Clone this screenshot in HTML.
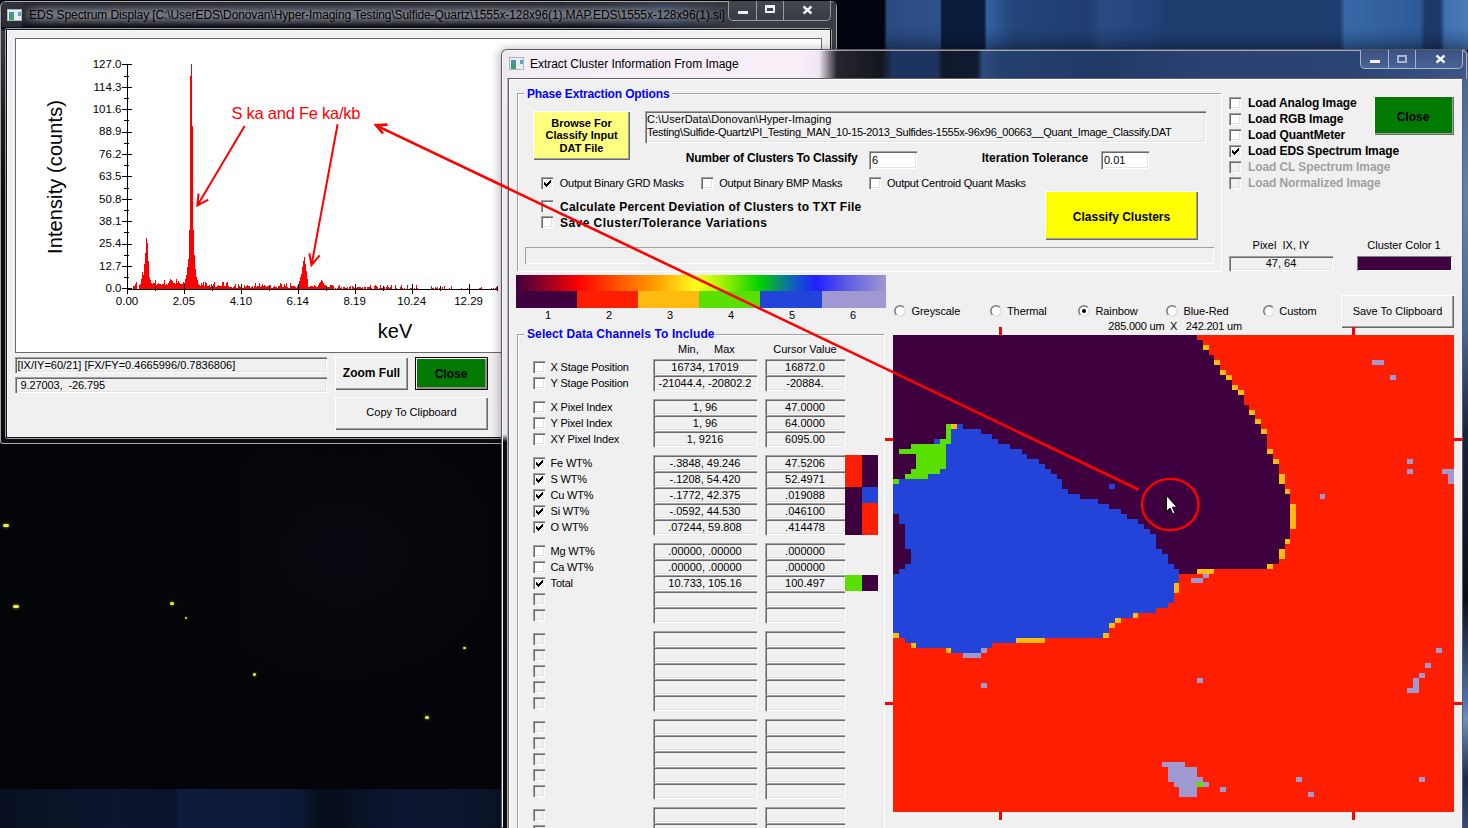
<!DOCTYPE html>
<html><head><meta charset="utf-8"><style>
html,body{margin:0;padding:0;width:1468px;height:828px;overflow:hidden;background:#000}
.abs{position:absolute}
.t{position:absolute;white-space:nowrap;font-family:"Liberation Sans", sans-serif;line-height:1.2;}
.sunk{background:#f0f0f0;box-shadow:inset 1px 1px 0 #a0a0a0, inset 2px 2px 0 #696969, inset -1px -1px 0 #fff, inset -2px -2px 0 #e3e3e3}
.sunkw{background:#fff;box-shadow:inset 1px 1px 0 #a0a0a0, inset 2px 2px 0 #696969, inset -1px -1px 0 #fff, inset -2px -2px 0 #e3e3e3}
.btn{background:#f0f0f0;box-shadow:inset 1px 1px 0 #fff, inset -1px -1px 0 #696969, inset -2px -2px 0 #a0a0a0}
.grp{box-shadow:inset 1px 1px 0 #a0a0a0, inset 2px 2px 0 #fff, 1px 1px 0 #fff}
.prog{background:#f0f0f0;box-shadow:inset 1px 1px 0 #a0a0a0, inset -1px -1px 0 #fff}
.cb{position:absolute;width:12px;height:12px;box-sizing:border-box;background:#fff;box-shadow:inset 1px 1px 0 #a0a0a0, inset 2px 2px 0 #696969, inset -1px -1px 0 #fff, inset -2px -2px 0 #e3e3e3}
.cb.dis{background:#f0f0f0}
</style></head><body>
<div class="abs" style="left:0;top:0;width:1468px;height:828px;background:#040509"></div><div class="abs" style="left:240px;top:450px;width:260px;height:230px;background:radial-gradient(ellipse at 40% 45%,rgba(16,18,30,0.35),rgba(10,12,20,0) 70%)"></div><div class="abs" style="left:837px;top:0;width:631px;height:50px;background:linear-gradient(90deg,#02050f 0px,#02050f 47px,#2a4a82 50px,#2e5088 103px,#0a1a3a 105px,#0a1a3a 147px,#3262a0 150px,#24467c 175px,#1f3d70 250px,#2a4a82 265px,#22427a 313px,#1e3e70 330px,#1e3e70 503px,#3868a8 508px,#2e5a98 583px,#1e3868 588px,#1e3868 603px,#4070b0 608px,#4a7ab8 631px)"></div><div class="abs" style="left:0;top:789px;width:501px;height:39px;background:linear-gradient(90deg,#081022,#0b162e 120px,#08122a 175px,#0e1c3c 180px,#0c1834 300px,#060c1a 320px,#0c1630 400px,#0a1428 501px)"></div><div class="abs" style="left:884px;top:28px;width:584px;height:22px;background:linear-gradient(180deg,rgba(8,16,36,0),rgba(8,16,36,0.35))"></div><div class="abs" style="left:3px;top:524px;width:6px;height:3px;background:#e8f040;border-radius:2px;box-shadow:0 0 3px #a0b020"></div><div class="abs" style="left:13px;top:605px;width:6px;height:3px;background:#e8f040;border-radius:2px;box-shadow:0 0 3px #a0b020"></div><div class="abs" style="left:170px;top:602px;width:4px;height:3px;background:#e8f040;border-radius:2px;box-shadow:0 0 3px #a0b020"></div><div class="abs" style="left:185px;top:617px;width:2px;height:2px;background:#e8f040;border-radius:2px;box-shadow:0 0 3px #a0b020"></div><div class="abs" style="left:253px;top:673px;width:3px;height:3px;background:#e8f040;border-radius:2px;box-shadow:0 0 3px #a0b020"></div><div class="abs" style="left:425px;top:716px;width:4px;height:3px;background:#e8f040;border-radius:2px;box-shadow:0 0 3px #a0b020"></div><div class="abs" style="left:463px;top:647px;width:3px;height:2px;background:#e8f040;border-radius:2px;box-shadow:0 0 3px #a0b020"></div><div class="abs" style="left:0;top:1px;width:837px;height:443px;border-radius:6px 6px 3px 3px;background:linear-gradient(180deg,#2e3038 0px,#24262e 4px,#1c1e26 22px,#0a0c14 27px,#3a3c44 30px,#34363e 50px,#1a1b20 120px,#0c0c10 200px);box-shadow:inset 0 0 0 1px #a8a8ac"></div><div class="abs" style="left:0;top:0;width:837px;height:1px;background:#000"></div><div class="abs" style="left:18px;top:3px;width:725px;height:23px;background:linear-gradient(180deg,rgba(118,120,128,0) 0%,rgba(118,120,128,0.85) 40%,rgba(118,120,128,0.85) 60%,rgba(118,120,128,0) 100%);-webkit-mask-image:linear-gradient(90deg,transparent,#000 25px,#000 690px,transparent)"></div><div class="abs" style="left:2px;top:2px;width:20px;height:25px;background:#3a3c44;opacity:0.6"></div><div class="abs" style="left:580px;top:2px;width:150px;height:25px;background:linear-gradient(90deg,rgba(60,80,120,0),rgba(80,100,140,0.35) 60%,rgba(60,80,120,0))"></div><div class="abs" style="left:660px;top:2px;width:172px;height:26px;background:linear-gradient(90deg,rgba(58,60,68,0),rgba(58,60,68,1) 80px)"></div><div class="abs" style="left:832px;top:2px;width:4px;height:60px;background:#3a3c44"></div><div class="abs" style="left:7px;top:9px;width:15px;height:12px;background:#e8ecec;border:1px solid #b0b4b8;box-sizing:border-box"><div class="abs" style="left:1px;top:2px;width:5px;height:8px;background:linear-gradient(#4a90b0,#40a060)"></div><div class="abs" style="left:10px;top:2px;width:3px;height:4px;background:#60a0c0"></div></div><div class="t " style="left:29px;top:8.3px;font-size:12px;font-weight:normal;color:#000;letter-spacing:-0.1px;text-shadow:0 0 5px rgba(200,200,206,0.6)">EDS Spectrum Display [C:\UserEDS\Donovan\Hyper-Imaging Testing\Sulfide-Quartz\1555x-128x96(1).MAP.EDS\1555x-128x96(1).si]</div><div class="abs" style="left:728px;top:1px;width:103px;height:20px;border:1px solid #9a9ca2;border-top:none;border-radius:0 0 5px 5px;box-sizing:border-box;background:linear-gradient(180deg,#44464e,#3a3c44)"></div><div class="abs" style="left:756px;top:1px;width:1px;height:19px;background:#9a9ca2"></div><div class="abs" style="left:783px;top:1px;width:1px;height:19px;background:#9a9ca2"></div><div class="abs" style="left:738px;top:11px;width:10px;height:3px;background:#f0f0f0"></div><div class="abs" style="left:765px;top:5px;width:10px;height:8px;border:2px solid #f0f0f0;border-top-width:3px;box-sizing:border-box"></div><svg class="abs" style="left:800px;top:5px" width="14" height="10"><path d="M3.5 1.5 L11.5 8.5 M11.5 1.5 L3.5 8.5" stroke="#f4f4f4" stroke-width="2.4"/></svg><div class="abs" style="left:5px;top:28px;width:827px;height:411px;border-radius:3px;box-shadow:inset 0 0 0 1px #a0a2a8"></div><div class="abs" style="left:7px;top:30px;width:823px;height:407px;background:#f0f0f0;box-shadow:0 0 0 1px #101218, inset 1px 1px 0 #fff"></div><div class="abs" style="left:15px;top:38px;width:807px;height:315px;background:#fff;box-shadow:inset 1px 1px 0 #6a6a6a, inset -1px -1px 0 #6a6a6a"></div><svg class="abs" style="left:0;top:0" width="837" height="443" shape-rendering="crispEdges"><path d="M133 289v-3M134 289v-3M135 289v-5M136 289v-7M139 289v-4M140 289v-5M141 289v-10M142 289v-17M143 289v-14M144 289v-25M145 289v-36M146 289v-51M147 289v-46M148 289v-28M149 289v-12M150 289v-9M151 289v-6M152 289v-5M153 289v-6M154 289v-6M155 289v-9M156 289v-4M157 289v-5M158 289v-6M159 289v-5M160 289v-5M161 289v-4M162 289v-5M163 289v-5M164 289v-9M165 289v-4M166 289v-5M167 289v-4M168 289v-6M169 289v-8M170 289v-10M171 289v-9M172 289v-8M173 289v-6M174 289v-6M175 289v-5M176 289v-10M177 289v-6M178 289v-8M179 289v-6M180 289v-5M181 289v-5M182 289v-5M183 289v-7M184 289v-6M185 289v-10M186 289v-14M187 289v-22M188 289v-30M189 289v-59M190 289v-213M191 289v-225M192 289v-163M193 289v-59M194 289v-34M195 289v-20M196 289v-12M197 289v-9M198 289v-5M199 289v-4M200 289v-3M201 289v-6M202 289v-4M203 289v-7M204 289v-3M205 289v-7M206 289v-6M207 289v-3M208 289v-3M209 289v-4M210 289v-2M211 289v-5M212 289v-3M213 289v-5M214 289v-7M215 289v-2M216 289v-2M217 289v-3M218 289v-4M219 289v-3M220 289v-3M221 289v-3M222 289v-7M223 289v-7M224 289v-3M225 289v-3M226 289v-6M227 289v-7M228 289v-3M229 289v-2M230 289v-2M231 289v-2M232 289v-1M233 289v-2M234 289v-3M235 289v-5M236 289v-1M237 289v-1M238 289v-5M239 289v-3M240 289v-2M241 289v-2M242 289v-1M243 289v-1M244 289v-4M245 289v-2M246 289v-3M247 289v-4M248 289v-3M249 289v-3M250 289v-1M251 289v-2M252 289v-3M253 289v-1M254 289v-3M255 289v-6M256 289v-2M257 289v-3M258 289v-3M259 289v-6M260 289v-2M261 289v-3M262 289v-5M263 289v-3M264 289v-4M265 289v-3M266 289v-2M267 289v-3M268 289v-3M269 289v-4M270 289v-4M271 289v-1M272 289v-1M273 289v-2M274 289v-3M275 289v-2M276 289v-2M277 289v-1M278 289v-3M279 289v-3M280 289v-6M281 289v-5M282 289v-2M283 289v-2M284 289v-5M285 289v-3M286 289v-6M287 289v-2M288 289v-1M289 289v-1M290 289v-6M291 289v-3M292 289v-3M293 289v-3M294 289v-3M295 289v-2M296 289v-1M297 289v-3M298 289v-1M299 289v-8M300 289v-12M301 289v-15M302 289v-22M303 289v-28M304 289v-32M305 289v-25M306 289v-18M307 289v-10M308 289v-2M309 289v-2M310 289v-3M311 289v-3M312 289v-3M313 289v-2M314 289v-4M315 289v-3M316 289v-2M317 289v-2M318 289v-4M319 289v-6M320 289v-7M321 289v-9M322 289v-8M323 289v-6M324 289v-4M325 289v-4M326 289v-2M327 289v-2M328 289v-2M329 289v-2M330 289v-4M331 289v-4M332 289v-4M333 289v-3M335 289v-1M337 289v-1M338 289v-3M339 289v-4M340 289v-1M341 289v-2M343 289v-2M344 289v-2M345 289v-1M346 289v-1M347 289v-2M349 289v-2M350 289v-3M352 289v-3M353 289v-2M354 289v-1M355 289v-1M356 289v-1M357 289v-2M358 289v-2M359 289v-2M360 289v-2M361 289v-1M362 289v-2M364 289v-2M365 289v-2M367 289v-2M368 289v-2M369 289v-2M370 289v-4M371 289v-1M374 289v-3M375 289v-4M376 289v-3M377 289v-2M379 289v-1M380 289v-4M381 289v-1M382 289v-1M384 289v-2M386 289v-2M387 289v-4M388 289v-2M389 289v-1M390 289v-2M391 289v-4M395 289v-4M396 289v-1M400 289v-2M401 289v-4M402 289v-1M404 289v-1M407 289v-4M410 289v-1M411 289v-1M412 289v-1M414 289v-1M416 289v-4M417 289v-1M431 289v-3M432 289v-1M433 289v-1M435 289v-2M436 289v-1M437 289v-2M439 289v-1M440 289v-1M442 289v-2M444 289v-3M449 289v-1M451 289v-3M461 289v-1M467 289v-1M479 289v-1M480 289v-1M481 289v-2M491 289v-1M493 289v-1M495 289v-1M496 289v-2" stroke="#ff0000" stroke-width="1" transform="translate(0.5,0)"/><rect x="127" y="64" width="1" height="225" fill="#000"/><rect x="122" y="64" width="10" height="1" fill="#000"/><rect x="124" y="76" width="5" height="1" fill="#000"/><rect x="122" y="87" width="10" height="1" fill="#000"/><rect x="124" y="98" width="5" height="1" fill="#000"/><rect x="122" y="109" width="10" height="1" fill="#000"/><rect x="124" y="120" width="5" height="1" fill="#000"/><rect x="122" y="132" width="10" height="1" fill="#000"/><rect x="124" y="143" width="5" height="1" fill="#000"/><rect x="122" y="154" width="10" height="1" fill="#000"/><rect x="124" y="165" width="5" height="1" fill="#000"/><rect x="122" y="176" width="10" height="1" fill="#000"/><rect x="124" y="188" width="5" height="1" fill="#000"/><rect x="122" y="199" width="10" height="1" fill="#000"/><rect x="124" y="210" width="5" height="1" fill="#000"/><rect x="122" y="221" width="10" height="1" fill="#000"/><rect x="124" y="232" width="5" height="1" fill="#000"/><rect x="122" y="244" width="10" height="1" fill="#000"/><rect x="124" y="255" width="5" height="1" fill="#000"/><rect x="122" y="266" width="10" height="1" fill="#000"/><rect x="124" y="277" width="5" height="1" fill="#000"/><rect x="122" y="288" width="10" height="1" fill="#000"/><rect x="127" y="289" width="371" height="1" fill="#000"/><rect x="127" y="284" width="1" height="10" fill="#000"/><rect x="155" y="286" width="1" height="5" fill="#000"/><rect x="184" y="284" width="1" height="10" fill="#000"/><rect x="212" y="286" width="1" height="5" fill="#000"/><rect x="241" y="284" width="1" height="10" fill="#000"/><rect x="269" y="286" width="1" height="5" fill="#000"/><rect x="298" y="284" width="1" height="10" fill="#000"/><rect x="326" y="286" width="1" height="5" fill="#000"/><rect x="355" y="284" width="1" height="10" fill="#000"/><rect x="383" y="286" width="1" height="5" fill="#000"/><rect x="412" y="284" width="1" height="10" fill="#000"/><rect x="440" y="286" width="1" height="5" fill="#000"/><rect x="469" y="284" width="1" height="10" fill="#000"/><rect x="497" y="286" width="1" height="5" fill="#000"/></svg><div class="t" style="left:71.5px;width:50px;text-align:right;top:58.1px;font-size:11.5px;font-weight:normal;color:#000;">127.0</div><div class="t" style="left:71.5px;width:50px;text-align:right;top:80.5px;font-size:11.5px;font-weight:normal;color:#000;">114.3</div><div class="t" style="left:71.5px;width:50px;text-align:right;top:102.9px;font-size:11.5px;font-weight:normal;color:#000;">101.6</div><div class="t" style="left:71.5px;width:50px;text-align:right;top:125.3px;font-size:11.5px;font-weight:normal;color:#000;">88.9</div><div class="t" style="left:71.5px;width:50px;text-align:right;top:147.7px;font-size:11.5px;font-weight:normal;color:#000;">76.2</div><div class="t" style="left:71.5px;width:50px;text-align:right;top:170.1px;font-size:11.5px;font-weight:normal;color:#000;">63.5</div><div class="t" style="left:71.5px;width:50px;text-align:right;top:192.5px;font-size:11.5px;font-weight:normal;color:#000;">50.8</div><div class="t" style="left:71.5px;width:50px;text-align:right;top:214.9px;font-size:11.5px;font-weight:normal;color:#000;">38.1</div><div class="t" style="left:71.5px;width:50px;text-align:right;top:237.3px;font-size:11.5px;font-weight:normal;color:#000;">25.4</div><div class="t" style="left:71.5px;width:50px;text-align:right;top:259.7px;font-size:11.5px;font-weight:normal;color:#000;">12.7</div><div class="t" style="left:71.5px;width:50px;text-align:right;top:282.1px;font-size:11.5px;font-weight:normal;color:#000;">0.0</div><div class="t" style="left:97.0px;width:60px;text-align:center;top:295.1px;font-size:11.5px;font-weight:normal;color:#000;">0.00</div><div class="t" style="left:153.93px;width:60px;text-align:center;top:295.1px;font-size:11.5px;font-weight:normal;color:#000;">2.05</div><div class="t" style="left:210.86px;width:60px;text-align:center;top:295.1px;font-size:11.5px;font-weight:normal;color:#000;">4.10</div><div class="t" style="left:267.78999999999996px;width:60px;text-align:center;top:295.1px;font-size:11.5px;font-weight:normal;color:#000;">6.14</div><div class="t" style="left:324.72px;width:60px;text-align:center;top:295.1px;font-size:11.5px;font-weight:normal;color:#000;">8.19</div><div class="t" style="left:381.65px;width:60px;text-align:center;top:295.1px;font-size:11.5px;font-weight:normal;color:#000;">10.24</div><div class="t" style="left:438.58px;width:60px;text-align:center;top:295.1px;font-size:11.5px;font-weight:normal;color:#000;">12.29</div><div class="t" style="left:355.0px;width:80px;text-align:center;top:319.0px;font-size:20px;font-weight:normal;color:#000;">keV</div><div class="t" style="left:-20px;top:166.5px;width:150px;text-align:center;font-size:20px;transform:rotate(-90deg);transform-origin:75px 12px;letter-spacing:0.1px">Intensity (counts)</div><div class="t " style="left:231.5px;top:104.1px;font-size:16.5px;font-weight:normal;color:#ff0000;letter-spacing:-0.25px">S ka and Fe ka/kb</div><div class="sunk abs" style="left:15px;top:357px;width:312px;height:16px;"></div><div class="sunk abs" style="left:15px;top:377px;width:312px;height:16px;"></div><div class="t " style="left:17.5px;top:358.9px;font-size:11px;font-weight:normal;color:#000;letter-spacing:0px">[IX/IY=60/21] [FX/FY=0.4665996/0.7836806]</div><div class="t " style="left:20.5px;top:378.9px;font-size:11px;font-weight:normal;color:#000;letter-spacing:-0.1px">9.27003,&nbsp; -26.795</div><div class="btn abs" style="left:335px;top:357px;width:73px;height:33px;"></div><div class="t" style="left:336.5px;width:70px;text-align:center;top:366.3px;font-size:12px;font-weight:bold;color:#000;">Zoom Full</div><div class="abs" style="left:415px;top:357px;width:73px;height:33px;border:1px solid #1a0000;box-sizing:border-box;background:#007a00;box-shadow:inset 1px 1px 0 #fff, inset -2px -2px 0 #909090"></div><div class="t" style="left:416.0px;width:70px;text-align:center;top:366.8px;font-size:12px;font-weight:bold;color:#000;">Close</div><div class="btn abs" style="left:335px;top:397px;width:153px;height:33px;"></div><div class="t" style="left:336.5px;width:150px;text-align:center;top:406.4px;font-size:11px;font-weight:normal;color:#000;">Copy To Clipboard</div><div class="abs" style="left:501px;top:49px;width:967px;height:779px;border-radius:6px 6px 0 0;background:linear-gradient(90deg,#ece6ee 0px,#f4eef6 20px,#f6eff7 300px,#f0e6f2 318px,#262630 336px,#14161e 380px,#1e3460 392px,#1e3460 436px,#10182c 442px,#121a30 476px,#2e4c80 482px,#24406e 500px,#203a66 600px,#2a4272 700px,#2a4474 850px,#3c5688 967px);box-shadow:inset 0 0 0 1px #5a5a62, inset 0 0 0 2px rgba(255,255,255,0.55), -2px 0 10px rgba(0,0,0,0.28)"></div><div class="abs" style="left:503px;top:79px;width:5px;height:749px;background:linear-gradient(180deg,#f2ecf4 0px,#eee4f0 355px,#0c0c12 363px,#0c0c10 749px)"></div><div class="abs" style="left:507px;top:78px;width:1px;height:750px;background:#b8b8bc"></div><div class="abs" style="left:1462px;top:79px;width:6px;height:749px;background:linear-gradient(180deg,#4a64a0 0px,#6080b8 120px,#4a66a0 250px,#1a2440 350px,#0a0e1a 520px,#4a70b0 620px,#6a90c8 640px,#1a2a50 700px,#304a80 749px);box-shadow:inset 1px 0 0 #8890a0"></div><div class="abs" style="left:509px;top:57px;width:15px;height:13px;background:#e8ecec;border:1px solid #b0b4b8;box-sizing:border-box"><div class="abs" style="left:1px;top:2px;width:5px;height:9px;background:linear-gradient(#4a90b0,#40a060)"></div><div class="abs" style="left:10px;top:2px;width:3px;height:4px;background:#60a0c0"></div></div><div class="t " style="left:530px;top:57.3px;font-size:12px;font-weight:normal;color:#000;letter-spacing:-0.04px">Extract Cluster Information From Image</div><div class="abs" style="left:1360px;top:50px;width:103px;height:19px;border:1px solid #a8b4c8;border-top:none;border-radius:0 0 5px 5px;box-sizing:border-box;background:linear-gradient(180deg,#3a5282,#4a6496)"></div><div class="abs" style="left:1388px;top:50px;width:1px;height:18px;background:#a8b4c8"></div><div class="abs" style="left:1415px;top:50px;width:1px;height:18px;background:#a8b4c8"></div><div class="abs" style="left:1370px;top:60px;width:10px;height:3px;background:#f4f4f4"></div><div class="abs" style="left:1397px;top:55px;width:10px;height:8px;border:2px solid #a8b4d0;box-sizing:border-box"></div><svg class="abs" style="left:1433px;top:54px" width="14" height="10"><path d="M3.5 1.5 L11.5 8.5 M11.5 1.5 L3.5 8.5" stroke="#f4f4f4" stroke-width="2.4"/></svg><div class="abs" style="left:509px;top:79px;width:953px;height:749px;background:#f0f0f0;box-shadow:0 0 0 1px #5e5e64, inset 1px 1px 0 #fff"></div><div class="grp abs" style="left:517px;top:93px;width:704px;height:178px;"></div><div class="abs" style="left:524px;top:86px;width:148px;height:14px;background:#f0f0f0"></div><div class="t " style="left:527px;top:87.3px;font-size:12px;font-weight:bold;color:#0000ff;letter-spacing:-0.15px">Phase Extraction Options</div><div class="abs" style="left:533px;top:111px;width:97px;height:49px;background:#ffff80;box-sizing:border-box;box-shadow:inset 1px 1px 0 #fff, inset -1px -1px 0 #696969, inset -2px -2px 0 #a0a0a0"></div><div class="t" style="left:531.5px;width:100px;text-align:center;top:116.7px;font-size:11px;font-weight:bold;color:#000;">Browse For</div><div class="t" style="left:531.5px;width:100px;text-align:center;top:129.2px;font-size:11px;font-weight:bold;color:#000;">Classify Input</div><div class="t" style="left:531.5px;width:100px;text-align:center;top:141.9px;font-size:11px;font-weight:bold;color:#000;">DAT File</div><div class="sunk abs" style="left:645px;top:111px;width:561px;height:32px;"></div><div class="t " style="left:647px;top:113.4px;font-size:11px;font-weight:normal;color:#000;letter-spacing:0.05px">C:\UserData\Donovan\Hyper-Imaging</div><div class="t " style="left:647px;top:126.4px;font-size:11px;font-weight:normal;color:#000;letter-spacing:-0.27px">Testing\Sulfide-Quartz\PI_Testing_MAN_10-15-2013_Sulfides-1555x-96x96_00663__Quant_Image_Classify.DAT</div><div class="t " style="left:685.7px;top:150.8px;font-size:12px;font-weight:bold;color:#000;letter-spacing:-0.2px">Number of Clusters To Classify</div><div class="sunkw abs" style="left:869px;top:151px;width:48px;height:18px;"></div><div class="t " style="left:872px;top:153.9px;font-size:11px;font-weight:normal;color:#000;">6</div><div class="t " style="left:981.7px;top:150.8px;font-size:12px;font-weight:bold;color:#000;letter-spacing:0px">Iteration Tolerance</div><div class="sunkw abs" style="left:1101px;top:151px;width:48px;height:18px;"></div><div class="t " style="left:1104px;top:153.9px;font-size:11px;font-weight:normal;color:#000;">0.01</div><div class="cb" style="left:541px;top:177px"><svg width="12" height="12" style="position:absolute;left:0;top:0" shape-rendering="crispEdges"><path d="M3 5h1v3h-1zM4 6h1v3h-1zM5 7h1v3h-1zM6 6h1v3h-1zM7 5h1v3h-1zM8 4h1v3h-1zM9 3h1v3h-1z" fill="#000"/></svg></div><div class="t " style="left:559.8px;top:176.9px;font-size:11px;font-weight:normal;color:#000;letter-spacing:-0.25px">Output Binary GRD Masks</div><div class="cb" style="left:701px;top:177px"></div><div class="t " style="left:719.2px;top:176.9px;font-size:11px;font-weight:normal;color:#000;letter-spacing:-0.25px">Output Binary BMP Masks</div><div class="cb" style="left:869px;top:177px"></div><div class="t " style="left:887px;top:176.9px;font-size:11px;font-weight:normal;color:#000;letter-spacing:-0.25px">Output Centroid Quant Masks</div><div class="cb" style="left:541px;top:200px"></div><div class="t " style="left:560px;top:199.8px;font-size:12px;font-weight:bold;color:#000;letter-spacing:0.25px">Calculate Percent Deviation of Clusters to TXT File</div><div class="cb" style="left:541px;top:216px"></div><div class="t " style="left:560px;top:215.8px;font-size:12px;font-weight:bold;color:#000;letter-spacing:0.45px">Save Cluster/Tolerance Variations</div><div class="abs" style="left:1045px;top:191px;width:153px;height:49px;background:#ffff00;box-sizing:border-box;box-shadow:inset 1px 1px 0 #fff, inset -1px -1px 0 #696969, inset -2px -2px 0 #a0a0a0"></div><div class="t" style="left:1046.5px;width:150px;text-align:center;top:209.8px;font-size:12px;font-weight:bold;color:#000;">Classify Clusters</div><div class="prog abs" style="left:525px;top:247px;width:689px;height:17px;"></div><div class="cb" style="left:1229px;top:97px"></div><div class="t " style="left:1248px;top:96.3px;font-size:12px;font-weight:bold;color:#000;letter-spacing:-0.1px">Load Analog Image</div><div class="cb" style="left:1229px;top:113px"></div><div class="t " style="left:1248px;top:112.3px;font-size:12px;font-weight:bold;color:#000;letter-spacing:-0.1px">Load RGB Image</div><div class="cb" style="left:1229px;top:129px"></div><div class="t " style="left:1248px;top:128.3px;font-size:12px;font-weight:bold;color:#000;letter-spacing:-0.1px">Load QuantMeter</div><div class="cb" style="left:1229px;top:145px"><svg width="12" height="12" style="position:absolute;left:0;top:0" shape-rendering="crispEdges"><path d="M3 5h1v3h-1zM4 6h1v3h-1zM5 7h1v3h-1zM6 6h1v3h-1zM7 5h1v3h-1zM8 4h1v3h-1zM9 3h1v3h-1z" fill="#000"/></svg></div><div class="t " style="left:1248px;top:144.3px;font-size:12px;font-weight:bold;color:#000;letter-spacing:-0.1px">Load EDS Spectrum Image</div><div class="cb dis" style="left:1229px;top:161px"></div><div class="t " style="left:1248px;top:160.3px;font-size:12px;font-weight:bold;color:#a0a0a0;letter-spacing:-0.1px">Load CL Spectrum Image</div><div class="cb dis" style="left:1229px;top:177px"></div><div class="t " style="left:1248px;top:176.3px;font-size:12px;font-weight:bold;color:#a0a0a0;letter-spacing:-0.1px">Load Normalized Image</div><div class="abs" style="left:1374px;top:96px;width:80px;height:39px;background:#007a00;box-sizing:border-box;box-shadow:inset 1px 1px 0 #fff, inset -1px -1px 0 #696969, inset -2px -2px 0 #a0a0a0"></div><div class="t" style="left:1378.0px;width:70px;text-align:center;top:109.8px;font-size:12px;font-weight:bold;color:#000;">Close</div><div class="t" style="left:1231.0px;width:100px;text-align:center;top:239.0px;font-size:11px;font-weight:normal;color:#000;">Pixel&nbsp; IX, IY</div><div class="sunk abs" style="left:1229px;top:256px;width:104px;height:15px;"></div><div class="t" style="left:1231.0px;width:100px;text-align:center;top:257.4px;font-size:11px;font-weight:normal;color:#000;">47, 64</div><div class="t" style="left:1354.0px;width:100px;text-align:center;top:239.0px;font-size:11px;font-weight:normal;color:#000;">Cluster Color 1</div><div class="abs" style="left:1357px;top:256px;width:95px;height:15px;background:#3f003f;box-shadow:inset 1px 1px 0 #808080, inset -1px -1px 0 #fff"></div><div class="abs" style="left:516px;top:275px;width:370px;height:16px;background:linear-gradient(90deg,#400040 0%,#a00020 9%,#ff0000 17%,#ff5000 27%,#ffa000 38%,#ffff20 49%,#90f000 57%,#00d000 66%,#1060c0 75%,#2020ff 81%,#6060e0 90%,#a098d0 100%)"></div><div class="abs" style="left:516px;top:291px;width:61px;height:17px;background:#3f003f"></div><div class="abs" style="left:577px;top:291px;width:61px;height:17px;background:#ff1e00"></div><div class="abs" style="left:638px;top:291px;width:61px;height:17px;background:#ffbb10"></div><div class="abs" style="left:699px;top:291px;width:61px;height:17px;background:#5ae000"></div><div class="abs" style="left:760px;top:291px;width:62px;height:17px;background:#2244d8"></div><div class="abs" style="left:822px;top:291px;width:64px;height:17px;background:#a098d0"></div><div class="t" style="left:538.0px;width:20px;text-align:center;top:309.4px;font-size:11px;font-weight:normal;color:#000;">1</div><div class="t" style="left:599.0px;width:20px;text-align:center;top:309.4px;font-size:11px;font-weight:normal;color:#000;">2</div><div class="t" style="left:660.0px;width:20px;text-align:center;top:309.4px;font-size:11px;font-weight:normal;color:#000;">3</div><div class="t" style="left:721.0px;width:20px;text-align:center;top:309.4px;font-size:11px;font-weight:normal;color:#000;">4</div><div class="t" style="left:782.0px;width:20px;text-align:center;top:309.4px;font-size:11px;font-weight:normal;color:#000;">5</div><div class="t" style="left:843.0px;width:20px;text-align:center;top:309.4px;font-size:11px;font-weight:normal;color:#000;">6</div><svg style="position:absolute;left:894px;top:305px" width="12" height="12"><circle cx="6" cy="6" r="5" fill="#fff" stroke="#dcdcdc" stroke-width="1.2"/><path d="M2.3 9.7 A5 5 0 0 1 9.7 2.3" stroke="#7a7a7a" stroke-width="1.5" fill="none"/></svg><div class="t " style="left:911.6px;top:304.9px;font-size:11px;font-weight:normal;color:#000;letter-spacing:-0.1px">Greyscale</div><svg style="position:absolute;left:990px;top:305px" width="12" height="12"><circle cx="6" cy="6" r="5" fill="#fff" stroke="#dcdcdc" stroke-width="1.2"/><path d="M2.3 9.7 A5 5 0 0 1 9.7 2.3" stroke="#7a7a7a" stroke-width="1.5" fill="none"/></svg><div class="t " style="left:1007px;top:304.9px;font-size:11px;font-weight:normal;color:#000;letter-spacing:-0.1px">Thermal</div><svg style="position:absolute;left:1078px;top:305px" width="12" height="12"><circle cx="6" cy="6" r="5" fill="#fff" stroke="#dcdcdc" stroke-width="1.2"/><path d="M2.3 9.7 A5 5 0 0 1 9.7 2.3" stroke="#7a7a7a" stroke-width="1.5" fill="none"/><circle cx="6" cy="6" r="2" fill="#000"/></svg><div class="t " style="left:1095.5px;top:304.9px;font-size:11px;font-weight:normal;color:#000;letter-spacing:-0.1px">Rainbow</div><svg style="position:absolute;left:1166px;top:305px" width="12" height="12"><circle cx="6" cy="6" r="5" fill="#fff" stroke="#dcdcdc" stroke-width="1.2"/><path d="M2.3 9.7 A5 5 0 0 1 9.7 2.3" stroke="#7a7a7a" stroke-width="1.5" fill="none"/></svg><div class="t " style="left:1183.5px;top:304.9px;font-size:11px;font-weight:normal;color:#000;letter-spacing:-0.1px">Blue-Red</div><svg style="position:absolute;left:1262.5px;top:305px" width="12" height="12"><circle cx="6" cy="6" r="5" fill="#fff" stroke="#dcdcdc" stroke-width="1.2"/><path d="M2.3 9.7 A5 5 0 0 1 9.7 2.3" stroke="#7a7a7a" stroke-width="1.5" fill="none"/></svg><div class="t " style="left:1279.3px;top:304.9px;font-size:11px;font-weight:normal;color:#000;letter-spacing:-0.1px">Custom</div><div class="btn abs" style="left:1341px;top:295px;width:113px;height:33px;"></div><div class="t" style="left:1337.5px;width:120px;text-align:center;top:304.9px;font-size:11px;font-weight:normal;color:#000;">Save To Clipboard</div><div class="t " style="left:1108.3px;top:319.9px;font-size:11px;font-weight:normal;color:#000;letter-spacing:-0.2px">285.000 um&nbsp; X&nbsp;&nbsp; 242.201 um</div><div class="grp abs" style="left:517px;top:334px;width:367px;height:506px;"></div><div class="abs" style="left:524px;top:327px;width:192px;height:14px;background:#f0f0f0"></div><div class="t " style="left:527px;top:326.8px;font-size:12px;font-weight:bold;color:#0000ff;letter-spacing:0.1px">Select Data Channels To Include</div><div class="t " style="left:678px;top:343.4px;font-size:11px;font-weight:normal;color:#000;">Min,&nbsp;&nbsp;&nbsp;&nbsp; Max</div><div class="t" style="left:755.0px;width:100px;text-align:center;top:343.4px;font-size:11px;font-weight:normal;color:#000;">Cursor Value</div><div class="cb" style="left:533px;top:361px"></div><div class="t " style="left:550.6px;top:360.9px;font-size:11px;font-weight:normal;color:#000;letter-spacing:-0.2px">X Stage Position</div><div class="sunk abs" style="left:653px;top:359px;width:104px;height:16px;"></div><div class="sunk abs" style="left:765px;top:359px;width:80px;height:16px;"></div><div class="t" style="left:653.0px;width:104px;text-align:center;top:361.4px;font-size:11px;font-weight:normal;color:#000;">16734, 17019</div><div class="t" style="left:765.0px;width:80px;text-align:center;top:361.4px;font-size:11px;font-weight:normal;color:#000;">16872.0</div><div class="cb" style="left:533px;top:377px"></div><div class="t " style="left:550.6px;top:376.9px;font-size:11px;font-weight:normal;color:#000;letter-spacing:-0.2px">Y Stage Position</div><div class="sunk abs" style="left:653px;top:375px;width:104px;height:16px;"></div><div class="sunk abs" style="left:765px;top:375px;width:80px;height:16px;"></div><div class="t" style="left:653.0px;width:104px;text-align:center;top:377.4px;font-size:11px;font-weight:normal;color:#000;">-21044.4, -20802.2</div><div class="t" style="left:765.0px;width:80px;text-align:center;top:377.4px;font-size:11px;font-weight:normal;color:#000;">-20884.</div><div class="cb" style="left:533px;top:401px"></div><div class="t " style="left:550.6px;top:400.9px;font-size:11px;font-weight:normal;color:#000;letter-spacing:-0.2px">X Pixel Index</div><div class="sunk abs" style="left:653px;top:399px;width:104px;height:16px;"></div><div class="sunk abs" style="left:765px;top:399px;width:80px;height:16px;"></div><div class="t" style="left:653.0px;width:104px;text-align:center;top:401.4px;font-size:11px;font-weight:normal;color:#000;">1, 96</div><div class="t" style="left:765.0px;width:80px;text-align:center;top:401.4px;font-size:11px;font-weight:normal;color:#000;">47.0000</div><div class="cb" style="left:533px;top:417px"></div><div class="t " style="left:550.6px;top:416.9px;font-size:11px;font-weight:normal;color:#000;letter-spacing:-0.2px">Y Pixel Index</div><div class="sunk abs" style="left:653px;top:415px;width:104px;height:16px;"></div><div class="sunk abs" style="left:765px;top:415px;width:80px;height:16px;"></div><div class="t" style="left:653.0px;width:104px;text-align:center;top:417.4px;font-size:11px;font-weight:normal;color:#000;">1, 96</div><div class="t" style="left:765.0px;width:80px;text-align:center;top:417.4px;font-size:11px;font-weight:normal;color:#000;">64.0000</div><div class="cb" style="left:533px;top:433px"></div><div class="t " style="left:550.6px;top:432.9px;font-size:11px;font-weight:normal;color:#000;letter-spacing:-0.2px">XY Pixel Index</div><div class="sunk abs" style="left:653px;top:431px;width:104px;height:16px;"></div><div class="sunk abs" style="left:765px;top:431px;width:80px;height:16px;"></div><div class="t" style="left:653.0px;width:104px;text-align:center;top:433.4px;font-size:11px;font-weight:normal;color:#000;">1, 9216</div><div class="t" style="left:765.0px;width:80px;text-align:center;top:433.4px;font-size:11px;font-weight:normal;color:#000;">6095.00</div><div class="cb" style="left:533px;top:457px"><svg width="12" height="12" style="position:absolute;left:0;top:0" shape-rendering="crispEdges"><path d="M3 5h1v3h-1zM4 6h1v3h-1zM5 7h1v3h-1zM6 6h1v3h-1zM7 5h1v3h-1zM8 4h1v3h-1zM9 3h1v3h-1z" fill="#000"/></svg></div><div class="t " style="left:550.6px;top:456.9px;font-size:11px;font-weight:normal;color:#000;letter-spacing:-0.2px">Fe WT%</div><div class="sunk abs" style="left:653px;top:455px;width:104px;height:16px;"></div><div class="sunk abs" style="left:765px;top:455px;width:80px;height:16px;"></div><div class="t" style="left:653.0px;width:104px;text-align:center;top:457.4px;font-size:11px;font-weight:normal;color:#000;">-.3848, 49.246</div><div class="t" style="left:765.0px;width:80px;text-align:center;top:457.4px;font-size:11px;font-weight:normal;color:#000;">47.5206</div><div class="cb" style="left:533px;top:473px"><svg width="12" height="12" style="position:absolute;left:0;top:0" shape-rendering="crispEdges"><path d="M3 5h1v3h-1zM4 6h1v3h-1zM5 7h1v3h-1zM6 6h1v3h-1zM7 5h1v3h-1zM8 4h1v3h-1zM9 3h1v3h-1z" fill="#000"/></svg></div><div class="t " style="left:550.6px;top:472.9px;font-size:11px;font-weight:normal;color:#000;letter-spacing:-0.2px">S WT%</div><div class="sunk abs" style="left:653px;top:471px;width:104px;height:16px;"></div><div class="sunk abs" style="left:765px;top:471px;width:80px;height:16px;"></div><div class="t" style="left:653.0px;width:104px;text-align:center;top:473.4px;font-size:11px;font-weight:normal;color:#000;">-.1208, 54.420</div><div class="t" style="left:765.0px;width:80px;text-align:center;top:473.4px;font-size:11px;font-weight:normal;color:#000;">52.4971</div><div class="cb" style="left:533px;top:489px"><svg width="12" height="12" style="position:absolute;left:0;top:0" shape-rendering="crispEdges"><path d="M3 5h1v3h-1zM4 6h1v3h-1zM5 7h1v3h-1zM6 6h1v3h-1zM7 5h1v3h-1zM8 4h1v3h-1zM9 3h1v3h-1z" fill="#000"/></svg></div><div class="t " style="left:550.6px;top:488.9px;font-size:11px;font-weight:normal;color:#000;letter-spacing:-0.2px">Cu WT%</div><div class="sunk abs" style="left:653px;top:487px;width:104px;height:16px;"></div><div class="sunk abs" style="left:765px;top:487px;width:80px;height:16px;"></div><div class="t" style="left:653.0px;width:104px;text-align:center;top:489.4px;font-size:11px;font-weight:normal;color:#000;">-.1772, 42.375</div><div class="t" style="left:765.0px;width:80px;text-align:center;top:489.4px;font-size:11px;font-weight:normal;color:#000;">.019088</div><div class="cb" style="left:533px;top:505px"><svg width="12" height="12" style="position:absolute;left:0;top:0" shape-rendering="crispEdges"><path d="M3 5h1v3h-1zM4 6h1v3h-1zM5 7h1v3h-1zM6 6h1v3h-1zM7 5h1v3h-1zM8 4h1v3h-1zM9 3h1v3h-1z" fill="#000"/></svg></div><div class="t " style="left:550.6px;top:504.9px;font-size:11px;font-weight:normal;color:#000;letter-spacing:-0.2px">Si WT%</div><div class="sunk abs" style="left:653px;top:503px;width:104px;height:16px;"></div><div class="sunk abs" style="left:765px;top:503px;width:80px;height:16px;"></div><div class="t" style="left:653.0px;width:104px;text-align:center;top:505.4px;font-size:11px;font-weight:normal;color:#000;">-.0592, 44.530</div><div class="t" style="left:765.0px;width:80px;text-align:center;top:505.4px;font-size:11px;font-weight:normal;color:#000;">.046100</div><div class="cb" style="left:533px;top:521px"><svg width="12" height="12" style="position:absolute;left:0;top:0" shape-rendering="crispEdges"><path d="M3 5h1v3h-1zM4 6h1v3h-1zM5 7h1v3h-1zM6 6h1v3h-1zM7 5h1v3h-1zM8 4h1v3h-1zM9 3h1v3h-1z" fill="#000"/></svg></div><div class="t " style="left:550.6px;top:520.9px;font-size:11px;font-weight:normal;color:#000;letter-spacing:-0.2px">O WT%</div><div class="sunk abs" style="left:653px;top:519px;width:104px;height:16px;"></div><div class="sunk abs" style="left:765px;top:519px;width:80px;height:16px;"></div><div class="t" style="left:653.0px;width:104px;text-align:center;top:521.4px;font-size:11px;font-weight:normal;color:#000;">.07244, 59.808</div><div class="t" style="left:765.0px;width:80px;text-align:center;top:521.4px;font-size:11px;font-weight:normal;color:#000;">.414478</div><div class="cb" style="left:533px;top:545px"></div><div class="t " style="left:550.6px;top:544.9px;font-size:11px;font-weight:normal;color:#000;letter-spacing:-0.2px">Mg WT%</div><div class="sunk abs" style="left:653px;top:543px;width:104px;height:16px;"></div><div class="sunk abs" style="left:765px;top:543px;width:80px;height:16px;"></div><div class="t" style="left:653.0px;width:104px;text-align:center;top:545.4px;font-size:11px;font-weight:normal;color:#000;">.00000, .00000</div><div class="t" style="left:765.0px;width:80px;text-align:center;top:545.4px;font-size:11px;font-weight:normal;color:#000;">.000000</div><div class="cb" style="left:533px;top:561px"></div><div class="t " style="left:550.6px;top:560.9px;font-size:11px;font-weight:normal;color:#000;letter-spacing:-0.2px">Ca WT%</div><div class="sunk abs" style="left:653px;top:559px;width:104px;height:16px;"></div><div class="sunk abs" style="left:765px;top:559px;width:80px;height:16px;"></div><div class="t" style="left:653.0px;width:104px;text-align:center;top:561.4px;font-size:11px;font-weight:normal;color:#000;">.00000, .00000</div><div class="t" style="left:765.0px;width:80px;text-align:center;top:561.4px;font-size:11px;font-weight:normal;color:#000;">.000000</div><div class="cb" style="left:533px;top:577px"><svg width="12" height="12" style="position:absolute;left:0;top:0" shape-rendering="crispEdges"><path d="M3 5h1v3h-1zM4 6h1v3h-1zM5 7h1v3h-1zM6 6h1v3h-1zM7 5h1v3h-1zM8 4h1v3h-1zM9 3h1v3h-1z" fill="#000"/></svg></div><div class="t " style="left:550.6px;top:576.9px;font-size:11px;font-weight:normal;color:#000;letter-spacing:-0.2px">Total</div><div class="sunk abs" style="left:653px;top:575px;width:104px;height:16px;"></div><div class="sunk abs" style="left:765px;top:575px;width:80px;height:16px;"></div><div class="t" style="left:653.0px;width:104px;text-align:center;top:577.4px;font-size:11px;font-weight:normal;color:#000;">10.733, 105.16</div><div class="t" style="left:765.0px;width:80px;text-align:center;top:577.4px;font-size:11px;font-weight:normal;color:#000;">100.497</div><div class="cb dis" style="left:533px;top:593px"></div><div class="sunk abs" style="left:653px;top:591px;width:104px;height:16px;"></div><div class="sunk abs" style="left:765px;top:591px;width:80px;height:16px;"></div><div class="cb dis" style="left:533px;top:609px"></div><div class="sunk abs" style="left:653px;top:607px;width:104px;height:16px;"></div><div class="sunk abs" style="left:765px;top:607px;width:80px;height:16px;"></div><div class="cb dis" style="left:533px;top:633px"></div><div class="sunk abs" style="left:653px;top:631px;width:104px;height:16px;"></div><div class="sunk abs" style="left:765px;top:631px;width:80px;height:16px;"></div><div class="cb dis" style="left:533px;top:649px"></div><div class="sunk abs" style="left:653px;top:647px;width:104px;height:16px;"></div><div class="sunk abs" style="left:765px;top:647px;width:80px;height:16px;"></div><div class="cb dis" style="left:533px;top:665px"></div><div class="sunk abs" style="left:653px;top:663px;width:104px;height:16px;"></div><div class="sunk abs" style="left:765px;top:663px;width:80px;height:16px;"></div><div class="cb dis" style="left:533px;top:681px"></div><div class="sunk abs" style="left:653px;top:679px;width:104px;height:16px;"></div><div class="sunk abs" style="left:765px;top:679px;width:80px;height:16px;"></div><div class="cb dis" style="left:533px;top:697px"></div><div class="sunk abs" style="left:653px;top:695px;width:104px;height:16px;"></div><div class="sunk abs" style="left:765px;top:695px;width:80px;height:16px;"></div><div class="cb dis" style="left:533px;top:721px"></div><div class="sunk abs" style="left:653px;top:719px;width:104px;height:16px;"></div><div class="sunk abs" style="left:765px;top:719px;width:80px;height:16px;"></div><div class="cb dis" style="left:533px;top:737px"></div><div class="sunk abs" style="left:653px;top:735px;width:104px;height:16px;"></div><div class="sunk abs" style="left:765px;top:735px;width:80px;height:16px;"></div><div class="cb dis" style="left:533px;top:753px"></div><div class="sunk abs" style="left:653px;top:751px;width:104px;height:16px;"></div><div class="sunk abs" style="left:765px;top:751px;width:80px;height:16px;"></div><div class="cb dis" style="left:533px;top:769px"></div><div class="sunk abs" style="left:653px;top:767px;width:104px;height:16px;"></div><div class="sunk abs" style="left:765px;top:767px;width:80px;height:16px;"></div><div class="cb dis" style="left:533px;top:785px"></div><div class="sunk abs" style="left:653px;top:783px;width:104px;height:16px;"></div><div class="sunk abs" style="left:765px;top:783px;width:80px;height:16px;"></div><div class="cb dis" style="left:533px;top:809px"></div><div class="sunk abs" style="left:653px;top:807px;width:104px;height:16px;"></div><div class="sunk abs" style="left:765px;top:807px;width:80px;height:16px;"></div><div class="cb dis" style="left:533px;top:825px"></div><div class="sunk abs" style="left:653px;top:823px;width:104px;height:16px;"></div><div class="sunk abs" style="left:765px;top:823px;width:80px;height:16px;"></div><div class="abs" style="left:845px;top:455px;width:17px;height:32px;background:#ff1e00"></div><div class="abs" style="left:862px;top:455px;width:16px;height:32px;background:#3f003f"></div><div class="abs" style="left:845px;top:487px;width:17px;height:16px;background:#3f003f"></div><div class="abs" style="left:862px;top:487px;width:16px;height:16px;background:#2244d8"></div><div class="abs" style="left:845px;top:503px;width:17px;height:32px;background:#3f003f"></div><div class="abs" style="left:862px;top:503px;width:16px;height:32px;background:#ff1e00"></div><div class="abs" style="left:845px;top:575px;width:17px;height:16px;background:#5ae000"></div><div class="abs" style="left:862px;top:575px;width:16px;height:16px;background:#3f003f"></div><svg style="position:absolute;left:893px;top:335px" width="561" height="477" viewBox="0 0 96 96" preserveAspectRatio="none" shape-rendering="crispEdges"><rect width="96" height="96" fill="#ff1e00"/><rect x="0" y="0" width="52" height="1" fill="#3f003f"/><rect x="0" y="1" width="53" height="1" fill="#3f003f"/><rect x="0" y="2" width="53" height="1" fill="#3f003f"/><rect x="53" y="2" width="1" height="1" fill="#ffbb10"/><rect x="0" y="3" width="54" height="1" fill="#3f003f"/><rect x="0" y="4" width="55" height="1" fill="#3f003f"/><rect x="0" y="5" width="55" height="1" fill="#3f003f"/><rect x="55" y="5" width="1" height="1" fill="#ffbb10"/><rect x="82" y="5" width="2" height="1" fill="#a098d0"/><rect x="0" y="6" width="56" height="1" fill="#3f003f"/><rect x="0" y="7" width="56" height="1" fill="#3f003f"/><rect x="56" y="7" width="1" height="1" fill="#ffbb10"/><rect x="0" y="8" width="57" height="1" fill="#3f003f"/><rect x="57" y="8" width="1" height="1" fill="#ffbb10"/><rect x="85" y="8" width="1" height="1" fill="#a098d0"/><rect x="0" y="9" width="58" height="1" fill="#3f003f"/><rect x="0" y="10" width="58" height="1" fill="#3f003f"/><rect x="58" y="10" width="1" height="1" fill="#ffbb10"/><rect x="0" y="11" width="59" height="1" fill="#3f003f"/><rect x="59" y="11" width="1" height="1" fill="#ffbb10"/><rect x="0" y="12" width="60" height="1" fill="#3f003f"/><rect x="0" y="13" width="60" height="1" fill="#3f003f"/><rect x="0" y="14" width="61" height="1" fill="#3f003f"/><rect x="0" y="15" width="61" height="1" fill="#3f003f"/><rect x="61" y="15" width="1" height="1" fill="#ffbb10"/><rect x="0" y="16" width="62" height="1" fill="#3f003f"/><rect x="0" y="17" width="62" height="1" fill="#3f003f"/><rect x="62" y="17" width="1" height="1" fill="#ffbb10"/><rect x="0" y="18" width="9" height="1" fill="#3f003f"/><rect x="9" y="18" width="1" height="1" fill="#5ae000"/><rect x="10" y="18" width="1" height="1" fill="#ffbb10"/><rect x="11" y="18" width="1" height="1" fill="#2244d8"/><rect x="12" y="18" width="51" height="1" fill="#3f003f"/><rect x="0" y="19" width="9" height="1" fill="#3f003f"/><rect x="9" y="19" width="1" height="1" fill="#5ae000"/><rect x="10" y="19" width="5" height="1" fill="#2244d8"/><rect x="15" y="19" width="48" height="1" fill="#3f003f"/><rect x="63" y="19" width="1" height="1" fill="#ffbb10"/><rect x="0" y="20" width="9" height="1" fill="#3f003f"/><rect x="9" y="20" width="1" height="1" fill="#5ae000"/><rect x="10" y="20" width="7" height="1" fill="#2244d8"/><rect x="17" y="20" width="47" height="1" fill="#3f003f"/><rect x="0" y="21" width="7" height="1" fill="#3f003f"/><rect x="7" y="21" width="1" height="1" fill="#2244d8"/><rect x="8" y="21" width="2" height="1" fill="#5ae000"/><rect x="10" y="21" width="8" height="1" fill="#2244d8"/><rect x="18" y="21" width="46" height="1" fill="#3f003f"/><rect x="0" y="22" width="3" height="1" fill="#3f003f"/><rect x="3" y="22" width="6" height="1" fill="#5ae000"/><rect x="9" y="22" width="11" height="1" fill="#2244d8"/><rect x="20" y="22" width="44" height="1" fill="#3f003f"/><rect x="0" y="23" width="1" height="1" fill="#3f003f"/><rect x="1" y="23" width="8" height="1" fill="#5ae000"/><rect x="9" y="23" width="13" height="1" fill="#2244d8"/><rect x="22" y="23" width="42" height="1" fill="#3f003f"/><rect x="64" y="23" width="1" height="1" fill="#ffbb10"/><rect x="0" y="24" width="4" height="1" fill="#3f003f"/><rect x="4" y="24" width="5" height="1" fill="#5ae000"/><rect x="9" y="24" width="14" height="1" fill="#2244d8"/><rect x="23" y="24" width="42" height="1" fill="#3f003f"/><rect x="0" y="25" width="4" height="1" fill="#3f003f"/><rect x="4" y="25" width="5" height="1" fill="#5ae000"/><rect x="9" y="25" width="16" height="1" fill="#2244d8"/><rect x="25" y="25" width="40" height="1" fill="#3f003f"/><rect x="65" y="25" width="1" height="1" fill="#ffbb10"/><rect x="88" y="25" width="1" height="1" fill="#a098d0"/><rect x="0" y="26" width="4" height="1" fill="#3f003f"/><rect x="4" y="26" width="5" height="1" fill="#5ae000"/><rect x="9" y="26" width="17" height="1" fill="#2244d8"/><rect x="26" y="26" width="40" height="1" fill="#3f003f"/><rect x="0" y="27" width="3" height="1" fill="#3f003f"/><rect x="3" y="27" width="5" height="1" fill="#5ae000"/><rect x="8" y="27" width="19" height="1" fill="#2244d8"/><rect x="27" y="27" width="39" height="1" fill="#3f003f"/><rect x="88" y="27" width="1" height="1" fill="#a098d0"/><rect x="94" y="27" width="2" height="1" fill="#a098d0"/><rect x="0" y="28" width="2" height="1" fill="#3f003f"/><rect x="2" y="28" width="4" height="1" fill="#5ae000"/><rect x="6" y="28" width="22" height="1" fill="#2244d8"/><rect x="28" y="28" width="38" height="1" fill="#3f003f"/><rect x="66" y="28" width="1" height="1" fill="#ffbb10"/><rect x="95" y="28" width="1" height="1" fill="#a098d0"/><rect x="0" y="29" width="1" height="1" fill="#5ae000"/><rect x="1" y="29" width="28" height="1" fill="#2244d8"/><rect x="29" y="29" width="37" height="1" fill="#3f003f"/><rect x="66" y="29" width="1" height="1" fill="#ffbb10"/><rect x="95" y="29" width="1" height="1" fill="#a098d0"/><rect x="0" y="30" width="29" height="1" fill="#2244d8"/><rect x="29" y="30" width="8" height="1" fill="#3f003f"/><rect x="37" y="30" width="1" height="1" fill="#2244d8"/><rect x="38" y="30" width="29" height="1" fill="#3f003f"/><rect x="0" y="31" width="30" height="1" fill="#2244d8"/><rect x="30" y="31" width="37" height="1" fill="#3f003f"/><rect x="67" y="31" width="1" height="1" fill="#ffbb10"/><rect x="0" y="32" width="32" height="1" fill="#2244d8"/><rect x="32" y="32" width="36" height="1" fill="#3f003f"/><rect x="73" y="32" width="1" height="1" fill="#a098d0"/><rect x="0" y="33" width="35" height="1" fill="#2244d8"/><rect x="35" y="33" width="33" height="1" fill="#3f003f"/><rect x="0" y="34" width="37" height="1" fill="#2244d8"/><rect x="37" y="34" width="31" height="1" fill="#3f003f"/><rect x="68" y="34" width="1" height="1" fill="#ffbb10"/><rect x="0" y="35" width="39" height="1" fill="#2244d8"/><rect x="39" y="35" width="29" height="1" fill="#3f003f"/><rect x="68" y="35" width="1" height="1" fill="#ffbb10"/><rect x="0" y="36" width="1" height="1" fill="#3f003f"/><rect x="1" y="36" width="39" height="1" fill="#2244d8"/><rect x="40" y="36" width="28" height="1" fill="#3f003f"/><rect x="68" y="36" width="1" height="1" fill="#ffbb10"/><rect x="0" y="37" width="1" height="1" fill="#3f003f"/><rect x="1" y="37" width="41" height="1" fill="#2244d8"/><rect x="42" y="37" width="26" height="1" fill="#3f003f"/><rect x="68" y="37" width="1" height="1" fill="#ffbb10"/><rect x="0" y="38" width="2" height="1" fill="#3f003f"/><rect x="2" y="38" width="41" height="1" fill="#2244d8"/><rect x="43" y="38" width="25" height="1" fill="#3f003f"/><rect x="68" y="38" width="1" height="1" fill="#ffbb10"/><rect x="0" y="39" width="2" height="1" fill="#3f003f"/><rect x="2" y="39" width="42" height="1" fill="#2244d8"/><rect x="44" y="39" width="24" height="1" fill="#3f003f"/><rect x="0" y="40" width="2" height="1" fill="#3f003f"/><rect x="2" y="40" width="43" height="1" fill="#2244d8"/><rect x="45" y="40" width="23" height="1" fill="#3f003f"/><rect x="0" y="41" width="2" height="1" fill="#3f003f"/><rect x="2" y="41" width="43" height="1" fill="#2244d8"/><rect x="45" y="41" width="22" height="1" fill="#3f003f"/><rect x="67" y="41" width="1" height="1" fill="#ffbb10"/><rect x="0" y="42" width="2" height="1" fill="#3f003f"/><rect x="2" y="42" width="43" height="1" fill="#2244d8"/><rect x="45" y="42" width="22" height="1" fill="#3f003f"/><rect x="0" y="43" width="3" height="1" fill="#3f003f"/><rect x="3" y="43" width="43" height="1" fill="#2244d8"/><rect x="46" y="43" width="20" height="1" fill="#3f003f"/><rect x="66" y="43" width="1" height="1" fill="#ffbb10"/><rect x="0" y="44" width="3" height="1" fill="#3f003f"/><rect x="3" y="44" width="44" height="1" fill="#2244d8"/><rect x="47" y="44" width="19" height="1" fill="#3f003f"/><rect x="66" y="44" width="1" height="1" fill="#ffbb10"/><rect x="0" y="45" width="3" height="1" fill="#3f003f"/><rect x="3" y="45" width="44" height="1" fill="#2244d8"/><rect x="47" y="45" width="19" height="1" fill="#3f003f"/><rect x="0" y="46" width="2" height="1" fill="#3f003f"/><rect x="2" y="46" width="46" height="1" fill="#2244d8"/><rect x="48" y="46" width="16" height="1" fill="#3f003f"/><rect x="64" y="46" width="1" height="1" fill="#ffbb10"/><rect x="0" y="47" width="1" height="1" fill="#3f003f"/><rect x="1" y="47" width="48" height="1" fill="#2244d8"/><rect x="49" y="47" width="3" height="1" fill="#3f003f"/><rect x="52" y="47" width="3" height="1" fill="#ffbb10"/><rect x="0" y="48" width="49" height="1" fill="#2244d8"/><rect x="53" y="48" width="1" height="1" fill="#a098d0"/><rect x="0" y="49" width="49" height="1" fill="#2244d8"/><rect x="51" y="49" width="2" height="1" fill="#a098d0"/><rect x="0" y="50" width="48" height="1" fill="#2244d8"/><rect x="48" y="50" width="1" height="1" fill="#ffbb10"/><rect x="0" y="51" width="48" height="1" fill="#2244d8"/><rect x="48" y="51" width="1" height="1" fill="#ffbb10"/><rect x="0" y="52" width="48" height="1" fill="#2244d8"/><rect x="0" y="53" width="48" height="1" fill="#2244d8"/><rect x="0" y="54" width="47" height="1" fill="#2244d8"/><rect x="0" y="55" width="45" height="1" fill="#2244d8"/><rect x="0" y="56" width="41" height="1" fill="#2244d8"/><rect x="41" y="56" width="1" height="1" fill="#ffbb10"/><rect x="0" y="57" width="38" height="1" fill="#2244d8"/><rect x="38" y="57" width="1" height="1" fill="#ffbb10"/><rect x="0" y="58" width="37" height="1" fill="#2244d8"/><rect x="37" y="58" width="1" height="1" fill="#ffbb10"/><rect x="0" y="59" width="37" height="1" fill="#2244d8"/><rect x="0" y="60" width="1" height="1" fill="#ffbb10"/><rect x="1" y="60" width="35" height="1" fill="#2244d8"/><rect x="36" y="60" width="1" height="1" fill="#ffbb10"/><rect x="2" y="61" width="19" height="1" fill="#2244d8"/><rect x="21" y="61" width="5" height="1" fill="#ffbb10"/><rect x="3" y="62" width="1" height="1" fill="#ffbb10"/><rect x="4" y="62" width="13" height="1" fill="#2244d8"/><rect x="9" y="63" width="1" height="1" fill="#ffbb10"/><rect x="10" y="63" width="5" height="1" fill="#2244d8"/><rect x="15" y="63" width="1" height="1" fill="#a098d0"/><rect x="93" y="63" width="1" height="1" fill="#a098d0"/><rect x="12" y="64" width="3" height="1" fill="#a098d0"/><rect x="91" y="66" width="1" height="1" fill="#a098d0"/><rect x="90" y="68" width="1" height="1" fill="#a098d0"/><rect x="52" y="69" width="1" height="1" fill="#a098d0"/><rect x="89" y="69" width="1" height="1" fill="#a098d0"/><rect x="15" y="70" width="1" height="1" fill="#a098d0"/><rect x="89" y="70" width="1" height="1" fill="#a098d0"/><rect x="88" y="71" width="2" height="1" fill="#a098d0"/><rect x="46" y="86" width="4" height="1" fill="#a098d0"/><rect x="47" y="87" width="5" height="1" fill="#a098d0"/><rect x="47" y="88" width="5" height="1" fill="#a098d0"/><rect x="47" y="89" width="6" height="1" fill="#a098d0"/><rect x="69" y="89" width="1" height="1" fill="#a098d0"/><rect x="90" y="89" width="1" height="1" fill="#a098d0"/><rect x="48" y="90" width="4" height="1" fill="#a098d0"/><rect x="52" y="90" width="1" height="1" fill="#5ae000"/><rect x="53" y="90" width="1" height="1" fill="#a098d0"/><rect x="49" y="91" width="3" height="1" fill="#a098d0"/><rect x="56" y="91" width="1" height="1" fill="#a098d0"/><rect x="49" y="92" width="3" height="1" fill="#a098d0"/><rect x="71" y="92" width="1" height="1" fill="#a098d0"/></svg><div class="abs" style="left:999px;top:327px;width:3px;height:8px;background:#ff0000"></div><div class="abs" style="left:999px;top:812px;width:3px;height:8px;background:#ff0000"></div><div class="abs" style="left:1352px;top:327px;width:3px;height:8px;background:#ff0000"></div><div class="abs" style="left:1352px;top:812px;width:3px;height:8px;background:#ff0000"></div><div class="abs" style="left:885px;top:438px;width:8px;height:3px;background:#ff0000"></div><div class="abs" style="left:1454px;top:438px;width:8px;height:3px;background:#ff0000"></div><div class="abs" style="left:885px;top:702px;width:8px;height:3px;background:#ff0000"></div><div class="abs" style="left:1454px;top:702px;width:8px;height:3px;background:#ff0000"></div><svg class="abs" style="left:0;top:0" width="1468" height="828"><path d="M376 125.3 L1138.6 489.5" stroke="#ff0000" stroke-width="2.6" fill="none"/><path d="M387.6 124.6 L376 125.1 L383 133.5" stroke="#ff0000" stroke-width="2.6" fill="none" stroke-linejoin="miter"/><path d="M244.6 126.1 L197.4 205.4 M198.5 193.5 L197.4 205.4 L208.3 199.6" stroke="#ff0000" stroke-width="2" fill="none"/><path d="M337.6 124.3 L311.5 265.2 M309.3 253.3 L311.5 265.2 L319.6 255.4" stroke="#ff0000" stroke-width="2" fill="none"/><ellipse cx="1170.3" cy="504.5" rx="28.2" ry="25.6" stroke="#ff0000" stroke-width="2.4" fill="none"/><path d="M1166.5 495.5 L1166.5 511.5 L1170 508 L1172.8 514 L1175 513 L1172.4 507.2 L1177 507.2 Z" fill="#fff" stroke="#000" stroke-width="1"/></svg>
</body></html>
